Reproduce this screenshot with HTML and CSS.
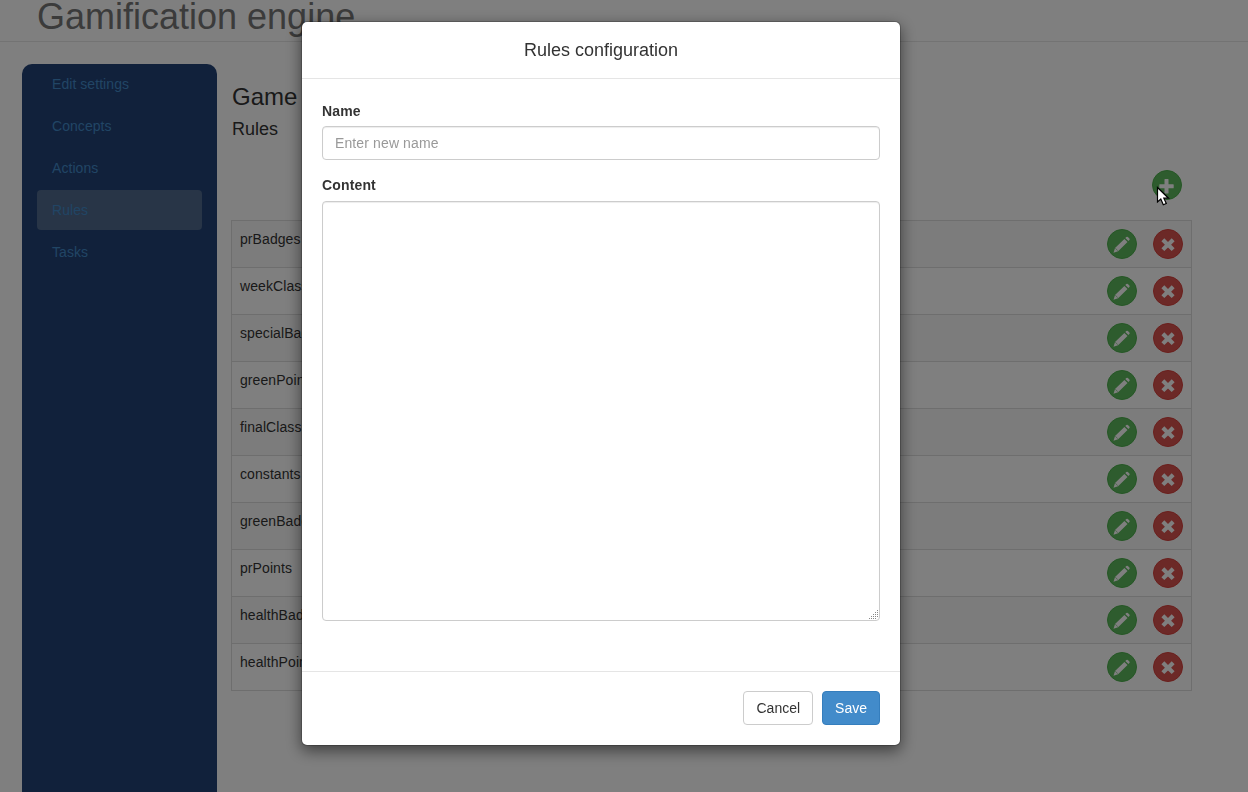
FILE: index.html
```html
<!DOCTYPE html>
<html lang="en">
<head>
<meta charset="utf-8">
<title>Gamification engine</title>
<link rel="stylesheet" href="styles.css">
</head>
<body>
<svg class="sprite" aria-hidden="true">
  <symbol id="pencil" viewBox="0 0 30 30"><path d="M6.500 23.700l1.500-4.600 9.400-9.200 3.100 3.100-9.400 9.200zM18.300 9l1-1q.8-.7 1.600 0l1.500 1.500q.7.800 0 1.600l-1 1z"/><path class="notch" d="M8.300 19.200l2.500 2.500"/></symbol>
  <symbol id="remove" viewBox="0 0 30 30"><path d="M11.300 9.300L15 12.900l3.700-3.600 2.900 2.900-3.500 3.500 3.500 3.500-2.900 2.900-3.700-3.600-3.700 3.600-2.900-2.900 3.500-3.500-3.500-3.500z"/></symbol>
  <symbol id="plus" viewBox="0 0 30 30"><path d="M12.500 9.500q0-.5.500-.5h3q.5 0 .5.500V14.200h4.700q.5 0 .5.500v3q0 .5-.5.500h-4.700v4.800q0 .5-.5.500h-3q-.5 0-.5-.5v-4.800H7.800q-.5 0-.5-.5v-3q0-.5.500-.5h4.700z"/></symbol>
</svg>
<header class="page-header"><h1 class="page-title">Gamification engine</h1></header>
<div class="layout">
  <nav class="sidebar">
    <a class="nav-item">Edit settings</a>
    <a class="nav-item">Concepts</a>
    <a class="nav-item">Actions</a>
    <a class="nav-item active">Rules</a>
    <a class="nav-item">Tasks</a>
  </nav>
  <main class="content">
    <h2 class="game-title">Game</h2>
    <h3 class="section-title">Rules</h3>
    <div class="toolbar"><button class="circle green"><svg><use href="#plus"/></svg></button></div>
    <div class="table">
      <div class="row"><span>prBadges</span><div class="actions"><button class="circle green"><svg><use href="#pencil"/></svg></button><button class="circle red"><svg><use href="#remove"/></svg></button></div></div>
      <div class="row"><span>weekClassification</span><div class="actions"><button class="circle green"><svg><use href="#pencil"/></svg></button><button class="circle red"><svg><use href="#remove"/></svg></button></div></div>
      <div class="row"><span>specialBadges</span><div class="actions"><button class="circle green"><svg><use href="#pencil"/></svg></button><button class="circle red"><svg><use href="#remove"/></svg></button></div></div>
      <div class="row"><span>greenPoints</span><div class="actions"><button class="circle green"><svg><use href="#pencil"/></svg></button><button class="circle red"><svg><use href="#remove"/></svg></button></div></div>
      <div class="row"><span>finalClassification</span><div class="actions"><button class="circle green"><svg><use href="#pencil"/></svg></button><button class="circle red"><svg><use href="#remove"/></svg></button></div></div>
      <div class="row"><span>constants</span><div class="actions"><button class="circle green"><svg><use href="#pencil"/></svg></button><button class="circle red"><svg><use href="#remove"/></svg></button></div></div>
      <div class="row"><span>greenBadges</span><div class="actions"><button class="circle green"><svg><use href="#pencil"/></svg></button><button class="circle red"><svg><use href="#remove"/></svg></button></div></div>
      <div class="row"><span>prPoints</span><div class="actions"><button class="circle green"><svg><use href="#pencil"/></svg></button><button class="circle red"><svg><use href="#remove"/></svg></button></div></div>
      <div class="row"><span>healthBadges</span><div class="actions"><button class="circle green"><svg><use href="#pencil"/></svg></button><button class="circle red"><svg><use href="#remove"/></svg></button></div></div>
      <div class="row"><span>healthPoints</span><div class="actions"><button class="circle green"><svg><use href="#pencil"/></svg></button><button class="circle red"><svg><use href="#remove"/></svg></button></div></div>
    </div>
  </main>
</div>
<div class="backdrop">
  <section class="modal" role="dialog">
    <header class="modal-header">Rules configuration</header>
    <div class="modal-body">
      <label class="label" for="name">Name</label>
      <input class="field" id="name" placeholder="Enter new name">
      <label class="label" for="content">Content</label>
      <div class="area-wrap">
        <textarea class="field area" id="content"></textarea>
        <svg class="grip" viewBox="0 0 10 10"><path d="M8 0h1v1h-1zM6 2h1v1h-1zM8 2h1v1h-1zM4 4h1v1h-1zM6 4h1v1h-1zM8 4h1v1h-1zM2 6h1v1h-1zM4 6h1v1h-1zM6 6h1v1h-1zM8 6h1v1h-1zM0 8h1v1h-1zM2 8h1v1h-1zM4 8h1v1h-1zM6 8h1v1h-1z"/></svg>
      </div>
    </div>
    <footer class="modal-footer"><button class="btn">Cancel</button><button class="btn primary">Save</button></footer>
  </section>
</div>
<svg class="cursor" viewBox="0 0 14 20"><path d="M1.500 1.500v14.500l3.300-2.900 2.500 5.700 3-1.300-2.500-5.300h4.700z"/></svg>
</body>
</html>
```
FILE: styles.css
```css
* { box-sizing: border-box; }
body {
  margin: 0;
  height: 792px;
  overflow: hidden;
  background: #fff;
  color: #333;
  font: 14px/20px "Liberation Sans", Arial, sans-serif;
}
button, input, textarea { font: inherit; }
h1, h2, h3 { margin: 0; font-weight: 400; }
.sprite { display: none; }
.notch { fill: none; stroke: #5cb85c; stroke-width: .6; }
.page-header { height: 42px; border-bottom: 1px solid #e7e7e7; padding-left: 37px; }
.page-title { font-size: 36px; line-height: 34px; color: #777; white-space: nowrap; }
.layout { display: flex; padding: 22px 56px 0 22px; }
.sidebar {
  display: flex;
  flex-direction: column;
  gap: 2px;
  width: 195px;
  height: 740px;
  padding: 0 15px;
  border-radius: 10px;
  background: #224276;
}
.nav-item { height: 40px; padding: 10px 15px; border-radius: 4px; color: #428bca; letter-spacing: .06px; }
.nav-item.active { background: #506a8e; }
.content { flex: 1; padding: 19px 0 0 14px; }
.game-title { padding-left: 1px; font-size: 24px; line-height: 28px; }
.section-title { padding-left: 1px; margin-top: 8px; font-size: 18px; line-height: 20px; }
.toolbar { display: flex; justify-content: flex-end; margin-top: 31px; padding-right: 10px; }
.table { margin-top: 20px; border: 1px solid #ddd; border-bottom: 0; }
.row {
  display: flex;
  justify-content: space-between;
  height: 47px;
  padding: 8px;
  border-bottom: 1px solid #ddd;
  letter-spacing: .08px;
}
.row:nth-child(odd) { background: #f9f9f9; }
.actions { display: flex; gap: 16px; }
.circle { width: 30px; height: 30px; padding: 0; border: 1px solid; border-radius: 50%; fill: #fff; }
.circle svg { display: block; width: 30px; height: 30px; margin: -1px; }
.green { background: #5cb85c; border-color: #4cae4c; }
.red { background: #d9534f; border-color: #d43f3a; }
.backdrop { position: fixed; inset: 0; background: rgba(0, 0, 0, .5); padding: 21px 0 0 301px; }
.modal {
  width: 600px;
  border: 1px solid rgba(0, 0, 0, .2);
  border-radius: 6px;
  background: #fff;
  background-clip: padding-box;
  box-shadow: 0 5px 15px rgba(0, 0, 0, .5);
}
.modal-header { height: 57px; padding: 15px; border-bottom: 1px solid #e5e5e5; font-size: 18px; line-height: 26px; text-align: center; }
.modal-body { height: 592px; padding: 22px 20px 0; }
.label { display: block; margin-bottom: 5px; font-weight: 700; letter-spacing: .15px; }
.field {
  display: block;
  width: 100%;
  height: 34px;
  margin: 0 0 15px;
  padding: 6px 12px;
  border: 1px solid #ccc;
  border-radius: 4px;
  background: #fff;
  box-shadow: inset 0 1px 1px rgba(0, 0, 0, .075);
  letter-spacing: .12px;
}
.field::placeholder { color: #999; opacity: 1; }
.area-wrap { position: relative; margin-top: 6px; }
.area { height: 420px; resize: none; }
.grip { position: absolute; right: 1px; bottom: 1px; width: 10px; height: 10px; fill: #888; }
.modal-footer { display: flex; justify-content: flex-end; gap: 9px; height: 74px; padding: 19px 20px 20px; border-top: 1px solid #e5e5e5; }
.btn { height: 34px; padding: 6px 12px; border: 1px solid #ccc; border-radius: 4px; background: #fff; color: #333; line-height: 20px; }
.btn.primary { background: #428bca; border-color: #357ebd; color: #fff; }
.cursor { position: fixed; left: 1156px; top: 186px; width: 14px; height: 20px; fill: #fff; stroke: #000; stroke-width: 1.2; }
```
